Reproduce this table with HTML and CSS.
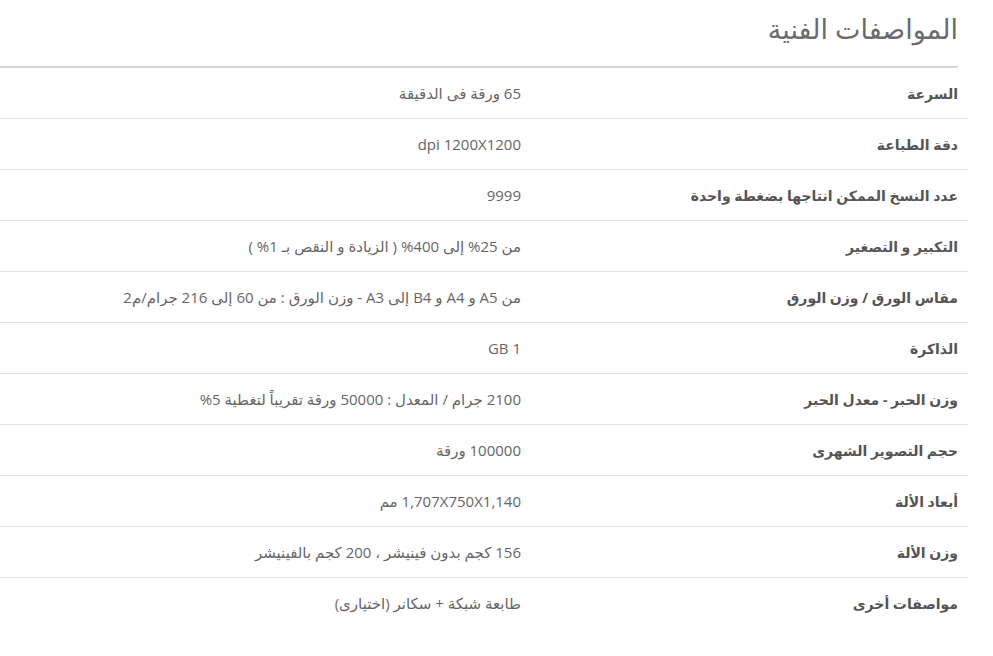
FILE: index.html
```html
<!DOCTYPE html>
<html lang="ar" dir="rtl">
<head>
<meta charset="utf-8">
<title>المواصفات الفنية</title>
<link rel="stylesheet" href="styles.css">
</head>
<body>
<section class="specs">
  <h2 class="specs-title">المواصفات الفنية</h2>
  <table class="specs-table">
    <colgroup><col class="col-label"><col class="col-value"></colgroup>
    <tbody>
      <tr><td class="label">السرعة</td><td class="value">65 ورقة فى الدقيقة</td></tr>
      <tr><td class="label">دقة الطباعة</td><td class="value">dpi 1200X1200</td></tr>
      <tr><td class="label">عدد النسخ الممكن انتاجها بضغطة واحدة</td><td class="value">9999</td></tr>
      <tr><td class="label">التكبير و التصغير</td><td class="value">من 25% إلى 400% ( الزيادة و النقص بـ 1% )</td></tr>
      <tr><td class="label">مقاس الورق / وزن الورق</td><td class="value">من A5 و A4 و B4 إلى A3 - وزن الورق : من 60 إلى 216 جرام/م2</td></tr>
      <tr><td class="label">الذاكرة</td><td class="value">GB 1</td></tr>
      <tr><td class="label">وزن الحبر - معدل الحبر</td><td class="value">2100 جرام / المعدل : 50000 ورقة تقريباً لتغطية 5%</td></tr>
      <tr><td class="label">حجم التصوير الشهرى</td><td class="value">100000 ورقة</td></tr>
      <tr><td class="label">أبعاد الألة</td><td class="value">1,707X750X1,140 مم</td></tr>
      <tr><td class="label">وزن الألة</td><td class="value">156 كجم بدون فينيشر ، 200 كجم بالفينيشر</td></tr>
      <tr><td class="label">مواصفات أخرى</td><td class="value">طابعة شبكة + سكانر (اختيارى)</td></tr>
    </tbody>
  </table>
</section>
</body>
</html>
```

FILE: styles.css
```css
html, body {
  margin: 0;
  padding: 0;
  background: #ffffff;
}

body {
  font-family: "Open Sans", "DejaVu Sans", sans-serif;
  direction: rtl;
}

.specs {
  width: 968px;
  margin-left: auto;
  margin-right: 25px;
}

.specs-title {
  margin: 0 10px 0 0;
  padding: 10px 0 18px 0;
  font-size: 27px;
  line-height: 38px;
  font-weight: normal;
  color: #6b6b6b;
  text-align: right;
  border-bottom: 2px solid #d4d4d4;
}

.specs-table {
  width: 968px;
  border-collapse: collapse;
  table-layout: fixed;
}

.col-label {
  width: 437px;
}

.specs-table td {
  height: 50px;
  padding: 0 10px;
  vertical-align: middle;
  text-align: right;
}

.specs-table tr + tr td {
  border-top: 1px solid #dee2e6;
}

.label {
  font-size: 14px;
  font-weight: bold;
  color: #555555;
}

.value {
  font-size: 15px;
  color: #666666;
}
```
